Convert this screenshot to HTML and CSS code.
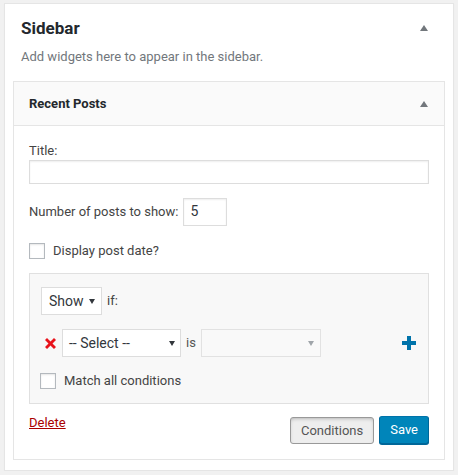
FILE: index.html
```html
<!DOCTYPE html>
<html lang="en">
<head>
<meta charset="utf-8">
<title>Sidebar widgets</title>
<link rel="stylesheet" href="styles.css">
</head>
<body>
<div class="sidebar">
  <div class="sidebar-head">
    <h2 class="sidebar-title">Sidebar</h2>
    <svg class="toggle" width="8" height="6" viewBox="0 0 8 6"><polygon points="4,0 8,6 0,6"/></svg>
  </div>
  <p class="sidebar-desc">Add widgets here to appear in the sidebar.</p>

  <div class="widget">
    <div class="widget-top">
      <h3 class="widget-title">Recent Posts</h3>
      <svg class="toggle" width="8" height="6" viewBox="0 0 8 6"><polygon points="4,0 8,6 0,6"/></svg>
    </div>
    <div class="widget-inside">
      <label class="field-label">Title:</label>
      <div class="text-input"></div>

      <div class="number-row">
        <span class="label">Number of posts to show:</span>
        <div class="number-input">5</div>
      </div>

      <div class="check-row date-row">
        <span class="checkbox"></span>
        <span class="label">Display post date?</span>
      </div>

      <div class="conditions">
        <div class="cond-row">
          <div class="select select-show">
            <span>Show</span>
            <svg class="arrow" width="6" height="5" viewBox="0 0 6 5"><polygon points="0,0 6,0 3,5"/></svg>
          </div>
          <span class="label">if:</span>
        </div>
        <div class="cond-row rule-row">
          <svg class="remove" width="11" height="11" viewBox="0 0 11 11"><polygon points="0,2 2,0 5.5,3.5 9,0 11,2 7.5,5.5 11,9 9,11 5.5,7.5 2,11 0,9 3.5,5.5"/></svg>
          <div class="select select-major">
            <span class="select-text">-- Select --</span>
            <svg class="arrow" width="6" height="5" viewBox="0 0 6 5"><polygon points="0,0 6,0 3,5"/></svg>
          </div>
          <span class="label is">is</span>
          <div class="select select-minor">
            <span></span>
            <svg class="arrow" width="6" height="5" viewBox="0 0 6 5"><polygon points="0,0 6,0 3,5"/></svg>
          </div>
          <svg class="add" width="14" height="14" viewBox="0 0 14 14"><rect x="0" y="5" width="14" height="4"/><rect x="5" y="0" width="4" height="14"/></svg>
        </div>
        <div class="check-row match-row">
          <span class="checkbox"></span>
          <span class="label">Match all conditions</span>
        </div>
      </div>

      <div class="actions">
        <a class="delete" href="#">Delete</a>
        <div class="buttons">
          <span class="button button-conditions">Conditions</span>
          <span class="button button-save">Save</span>
        </div>
      </div>
    </div>
  </div>
</div>
</body>
</html>
```

FILE: styles.css
```css
html, body {
  margin: 0;
  padding: 0;
}
body {
  background: #f1f1f1;
  padding: 3px 4px 0;
  font-family: Roboto, "Liberation Sans", sans-serif;
  font-size: 13px;
  color: #444;
}
.sidebar {
  background: #fff;
  border: 1px solid #e5e5e5;
  box-shadow: 0 1px 1px rgba(0,0,0,.04);
  padding: 0 8px 10px;
}
.sidebar-head {
  display: flex;
  align-items: center;
  justify-content: space-between;
  padding: 12px 17px 0 8px;
}
.sidebar-title {
  margin: 0;
  font-size: 17px;
  line-height: 24px;
  font-weight: 700;
  color: #23282d;
}
.toggle {
  display: block;
  fill: #72777c;
}
.sidebar-desc {
  margin: 7px 0 0;
  padding-left: 8px;
  font-size: 13px;
  line-height: 20px;
  color: #72777c;
}
.widget {
  margin-top: 14px;
  border: 1px solid #e5e5e5;
  background: #fff;
}
.widget-top {
  display: flex;
  align-items: center;
  justify-content: space-between;
  height: 43px;
  padding: 0 16px 0 15px;
  background: #fafafa;
  border-bottom: 1px solid #e5e5e5;
}
.widget-title {
  margin: 0;
  font-size: 13px;
  font-weight: 700;
  color: #23282d;
}
.widget-inside {
  padding: 16px 15px 15px;
}
.field-label {
  display: block;
  line-height: 18px;
}
.label {
  line-height: 18px;
}
.text-input {
  height: 24px;
  box-sizing: border-box;
  border: 1px solid #ddd;
  box-shadow: inset 0 1px 2px rgba(0,0,0,.07);
  background: #fff;
}
.number-row {
  display: flex;
  align-items: center;
  gap: 5px;
  margin-top: 14px;
}
.number-input {
  width: 44px;
  height: 28px;
  box-sizing: border-box;
  border: 1px solid #ddd;
  box-shadow: inset 0 1px 2px rgba(0,0,0,.07);
  padding-left: 6px;
  font-size: 14px;
  line-height: 24px;
  color: #32373c;
}
.check-row {
  display: flex;
  align-items: center;
  gap: 8px;
}
.date-row {
  margin-top: 16px;
}
.checkbox {
  width: 16px;
  height: 16px;
  box-sizing: border-box;
  border: 1px solid #b4b9be;
  background: #fff;
  box-shadow: inset 0 1px 2px rgba(0,0,0,.1);
}
.conditions {
  margin-top: 13px;
  border: 1px solid #e0e0e0;
  background: #f8f8f8;
  padding: 13px 11px 14px 10px;
}
.cond-row {
  display: flex;
  align-items: center;
  gap: 5px;
  padding-left: 1px;
}
.rule-row {
  margin-top: 14px;
  padding-left: 5px;
  gap: 5px;
}
.select {
  display: flex;
  align-items: center;
  justify-content: space-between;
  height: 28px;
  box-sizing: border-box;
  border: 1px solid #ddd;
  background: #fff;
  font-size: 14px;
  color: #32373c;
}
.select-text {
  font-kerning: none;
  font-variant-ligatures: none;
}
.arrow {
  display: block;
  fill: #32373c;
}
.select-show {
  width: 61px;
  padding: 0 6px 0 7px;
}
.select-major {
  width: 119px;
  padding: 0 5px 0 6px;
  margin-left: 1px;
}
.select-minor {
  width: 120px;
  padding: 0 6px;
  border-color: #e2e2e2;
  background: #f9f9f9;
}
.select-minor .arrow {
  fill: #a0a5aa;
}
.is {
  color: #555;
}
.remove {
  display: block;
  fill: #e8131b;
}
.add {
  display: block;
  fill: #0073aa;
  margin-left: auto;
  margin-right: 1px;
}
.match-row {
  margin-top: 16px;
  height: 16px;
}
.actions {
  display: flex;
  justify-content: space-between;
  align-items: flex-start;
  margin-top: 12px;
}
.delete {
  margin-top: -2px;
  line-height: 18px;
  color: #a00;
  text-decoration: underline;
}
.buttons {
  display: flex;
  align-items: flex-start;
  gap: 5px;
}
.button {
  display: block;
  height: 28px;
  box-sizing: border-box;
  padding: 0 10px;
  line-height: 26px;
  border-radius: 3px;
  border: 1px solid;
  font-size: 13px;
}
.button-conditions {
  margin-top: 1px;
  height: 27px;
  line-height: 25px;
  background: #eee;
  border-color: #999;
  color: #555;
  box-shadow: inset 0 2px 5px -3px rgba(0,0,0,.5);
}
.button-save {
  background: #0085ba;
  border-color: #0073aa #006799 #006799;
  color: #fff;
  box-shadow: 0 1px 0 #006799;
}
```
